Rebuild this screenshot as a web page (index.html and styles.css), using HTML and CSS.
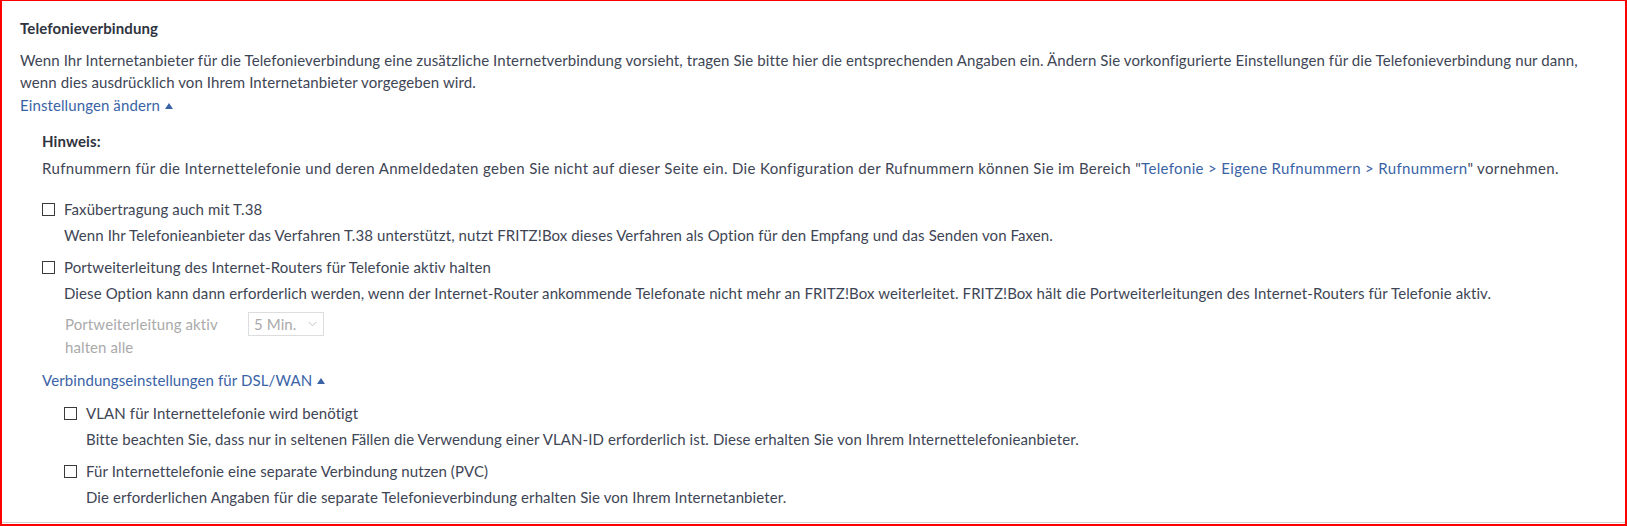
FILE: index.html
```html
<!DOCTYPE html>
<html lang="de">
<head>
<meta charset="utf-8">
<title>Telefonieverbindung</title>
<link rel="stylesheet" href="styles.css">
</head>
<body>
<div class="frame">
  <div class="content">
    <h2 class="title">Telefonieverbindung</h2>
    <p class="intro">Wenn Ihr Internetanbieter für die Telefonieverbindung eine zusätzliche Internetverbindung vorsieht, tragen Sie bitte hier die entsprechenden Angaben ein. Ändern Sie vorkonfigurierte Einstellungen für die Telefonieverbindung nur dann, wenn dies ausdrücklich von Ihrem Internetanbieter vorgegeben wird.</p>
    <a class="toggle toggle-main" href="#">Einstellungen ändern<span class="tri"></span></a>

    <div class="settings">
      <div class="hint-title">Hinweis:</div>
      <p class="hint-text">Rufnummern für die Internettelefonie und deren Anmeldedaten geben Sie nicht auf dieser Seite ein. Die Konfiguration der Rufnummern können Sie im Bereich "<a class="link" href="#">Telefonie &gt; Eigene Rufnummern &gt; Rufnummern</a>" vornehmen.</p>

      <div class="option option-first">
        <label class="check-row"><input type="checkbox" class="cb"><span>Faxübertragung auch mit T.38</span></label>
        <p class="desc">Wenn Ihr Telefonieanbieter das Verfahren T.38 unterstützt, nutzt FRITZ!Box dieses Verfahren als Option für den Empfang und das Senden von Faxen.</p>
      </div>

      <div class="option">
        <label class="check-row"><input type="checkbox" class="cb"><span>Portweiterleitung des Internet-Routers für Telefonie aktiv halten</span></label>
        <p class="desc">Diese Option kann dann erforderlich werden, wenn der Internet-Router ankommende Telefonate nicht mehr an FRITZ!Box weiterleitet. FRITZ!Box hält die Portweiterleitungen des Internet-Routers für Telefonie aktiv.</p>
        <div class="field-row">
          <span class="field-label">Portweiterleitung aktiv halten alle</span>
          <div class="select">
            <span>5 Min.</span>
            <svg class="chev" width="9" height="6" viewBox="0 0 9 6"><path d="M0.5 0.8 L4.5 4.8 L8.5 0.8" fill="none" stroke="#c4c4c4" stroke-width="1"/></svg>
          </div>
        </div>
      </div>

      <a class="toggle toggle-sub" href="#">Verbindungseinstellungen für DSL/WAN<span class="tri"></span></a>

      <div class="sub">
        <div class="option option-sub-first">
          <label class="check-row"><input type="checkbox" class="cb"><span>VLAN für Internettelefonie wird benötigt</span></label>
          <p class="desc">Bitte beachten Sie, dass nur in seltenen Fällen die Verwendung einer VLAN-ID erforderlich ist. Diese erhalten Sie von Ihrem Internettelefonieanbieter.</p>
        </div>
        <div class="option">
          <label class="check-row"><input type="checkbox" class="cb"><span>Für Internettelefonie eine separate Verbindung nutzen (PVC)</span></label>
          <p class="desc">Die erforderlichen Angaben für die separate Telefonieverbindung erhalten Sie von Ihrem Internetanbieter.</p>
        </div>
      </div>
    </div>
  </div>
</div>
</body>
</html>
```

FILE: styles.css
```css
* {
  box-sizing: border-box;
}

html, body {
  margin: 0;
  padding: 0;
  background: #ffffff;
}

body {
  font-family: Lato, "Open Sans", sans-serif;
  font-size: 15px;
  line-height: 22px;
  letter-spacing: 0.1px;
  color: #3e4555;
}

.frame {
  width: 1627px;
  height: 526px;
  border-top: 1px solid #ff0000;
  border-left: 2px solid #ff0000;
  border-right: 2px solid #ff0000;
  border-bottom: 2px solid #ff0000;
  padding-bottom: 1px;
}

.content {
  height: 522px;
  padding: 16px 30px 0 18px;
  border-bottom: 1px solid #d3d3d3;
}

.title {
  margin: 0;
  font-size: 15px;
  line-height: 22px;
  font-weight: 700;
  color: #2f3440;
}

.intro {
  margin: 10px 0 0 0;
}

.toggle {
  display: inline-block;
  color: #3a63a6;
  text-decoration: none;
}

.toggle-main {
  margin-top: 1px;
}

.tri {
  display: inline-block;
  width: 0;
  height: 0;
  margin-left: 5px;
  border-left: 4px solid transparent;
  border-right: 4px solid transparent;
  border-bottom: 6px solid #3a63a6;
  vertical-align: 2px;
}

.settings {
  padding-left: 22px;
  margin-top: 14px;
}

.hint-title {
  font-weight: 700;
  color: #2f3440;
}

.hint-text {
  margin: 5px 0 0 0;
  letter-spacing: 0.34px;
}

.link {
  color: #3a63a6;
  text-decoration: none;
}

.option {
  margin-top: 10px;
}

.option-first {
  margin-top: 19px;
}

.check-row {
  display: flex;
  align-items: center;
  gap: 9px;
}

.cb {
  appearance: none;
  -webkit-appearance: none;
  width: 13px;
  height: 13px;
  margin: 0;
  border: 1px solid #3a3a3a;
  background: #ffffff;
  border-radius: 0;
  flex: none;
}

.desc {
  margin: 4px 0 0 22px;
}

.field-row {
  display: flex;
  align-items: flex-start;
  margin: 9px 0 0 23px;
  color: #aaaaaa;
}

.field-label {
  width: 175px;
  flex: none;
  line-height: 23px;
}

.select {
  display: flex;
  align-items: center;
  justify-content: space-between;
  width: 76px;
  height: 24px;
  margin-left: 8px;
  margin-top: -1px;
  padding: 0 6px 0 5px;
  border: 1px solid #dddddd;
  color: #aaaaaa;
}

.chev {
  display: block;
}

.toggle-sub {
  margin-top: 10px;
}

.sub {
  padding-left: 22px;
}

.option-sub-first {
  margin-top: 11px;
}
```
